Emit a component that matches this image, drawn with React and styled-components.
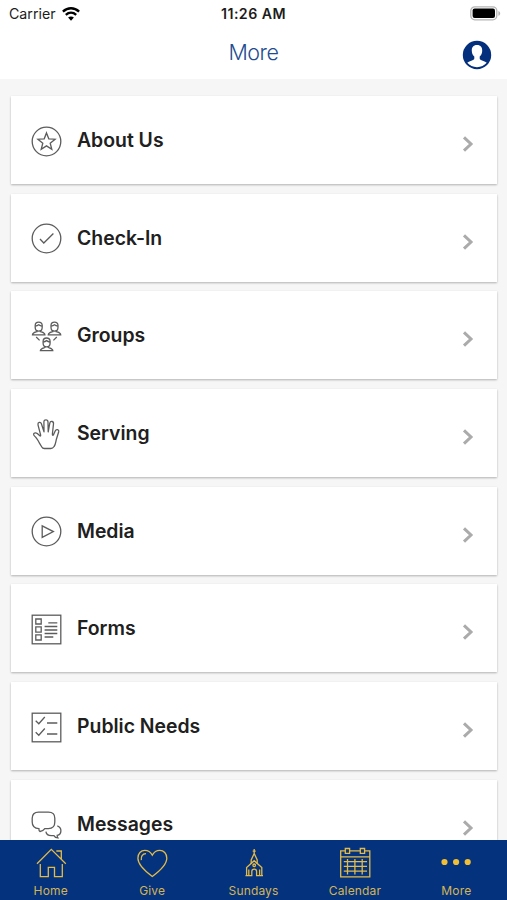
import React from "react";
import styled, { createGlobalStyle } from "styled-components";

const GlobalStyle = createGlobalStyle`
  * {
    box-sizing: border-box;
  }

  body {
    margin: 0;
    background-color: #f6f6f6;
    font-family: Inter, "Liberation Sans", sans-serif;
  }
`;

const Screen = styled.div`
  width: 100%;
  height: 100vh;
  display: flex;
  flex-direction: column;
  overflow: hidden;
`;

const Header = styled.header`
  flex: none;
  height: 79px;
  background-color: #fff;
`;

const StatusBar = styled.div`
  display: grid;
  grid-template-columns: 1fr auto 1fr;
  align-items: center;
  height: 27px;
  padding: 0 6px 0 9px;
  color: #1c1c1c;
`;

const Carrier = styled.div`
  display: flex;
  align-items: center;
  gap: 6px;
  font-size: 14.2px;
`;

const Time = styled.div`
  padding-right: 3px;
  font-size: 14.2px;
  font-weight: 600;
  letter-spacing: 0.45px;
`;

const Battery = styled.svg`
  justify-self: end;
`;

const TitleBar = styled.div`
  display: grid;
  grid-template-columns: 1fr auto 1fr;
  align-items: center;
  height: 52px;
  padding: 0 15px;
`;

const Title = styled.h1`
  grid-column: 2;
  margin: 0;
  padding-bottom: 2px;
  color: #1f4d91;
  font-size: 21.5px;
  font-weight: 300;
  letter-spacing: -0.45px;
`;

const ProfileButton = styled.button`
  justify-self: end;
  display: flex;
  margin-top: 3px;
  padding: 0;
  border: none;
  background: none;
`;

const List = styled.ul`
  flex: 1;
  min-height: 0;
  display: flex;
  flex-direction: column;
  gap: 9.7px;
  margin: 0;
  padding: 17px 10px 0 11px;
  list-style-type: none;
  overflow: hidden;
`;

const Card = styled.li`
  flex: none;
  display: flex;
  align-items: center;
  height: 88px;
  padding: 0 23px 0 20px;
  background-color: #fff;
  box-shadow: 0 1px 2px rgba(0, 0, 0, 0.28);
`;

const CardIcon = styled.svg`
  flex: none;
  width: 31px;
  height: 31px;
  margin-top: 2px;
  fill: none;
  stroke: #5c5c5c;
  stroke-width: 1.3;
`;

const CardLabel = styled.span`
  flex: 1;
  margin-left: 15px;
  color: #202020;
  font-size: 19.4px;
  font-weight: 600;
`;

const Chevron = styled.svg`
  flex: none;
  margin-top: 8px;
  fill: none;
  stroke: #ababab;
  stroke-width: 3;
`;

const TabBar = styled.nav`
  flex: none;
  display: flex;
  height: 60.5px;
  background-color: #05327c;
`;

const Tab = styled.a`
  flex: 1;
  display: flex;
  flex-direction: column;
  align-items: center;
  padding-top: 7.5px;
  color: #d3b556;
  font-size: 12px;
  line-height: 15px;
  letter-spacing: 0.15px;
`;

const TabIcon = styled.svg`
  width: 32px;
  height: 32px;
  margin-bottom: 4px;
  fill: none;
  stroke: #e3bb48;
  stroke-width: 1.3;
`;

const Person = ({ x, y }) => (
  <g transform={`translate(${x} ${y})`}>
    <path d="M3.2 4C3.2 1.700 4.600.6 6.700.6s3.500 1.100 3.500 3.400v1.600c0 2.200-1.500 3.900-3.500 3.900S3.200 7.800 3.200 5.600z" />
    <path d="M3.300 4.600C5 4.300 6 3.700 6.700 3.200c.7.500 1.700 1.100 3.400 1.400" />
    <path d="M5 8.600v1.500c-2.300.7-4.300.9-4.500 3.100h12.400c-.2-2.200-2.200-2.400-4.500-3.100V8.600" />
  </g>
);

const items = [
  {
    label: "About Us",
    icon: (
      <>
        <circle cx="15.500" cy="15.500" r="14.300" />
        <path d="M15.500 6.900l2.300 5.900 6.300.4-4.900 4 1.600 6.200-5.300-3.500-5.300 3.500 1.600-6.200-4.900-4 6.300-.4z" />
      </>
    ),
  },
  {
    label: "Check-In",
    icon: (
      <>
        <circle cx="15.500" cy="15.500" r="14.300" />
        <path d="M9 16l3.800 4L22.400 10.500" />
      </>
    ),
  },
  {
    label: "Groups",
    icon: (
      <>
        <Person x={1} y={0.600} />
        <Person x={16.800} y={0.600} />
        <Person x={8.900} y={16.400} />
        <path d="M5.200 16l3.400 3.400M25.800 16l-3.400 3.400" />
      </>
    ),
  },
  {
    label: "Serving",
    icon: (
      <path
        strokeLinejoin="round"
        d="M8.300 23.800C6.800 21.400 6.200 19.600 4.700 18.200 3.500 17.100 2.200 16.400 2.600 15c.5-1.500 2.500-1.400 3.700-.4l2.500 2.200c.7.500 1-.1.800-.9L7 5.800C6.500 3.200 9.600 2.400 10.400 4.800l2.600 8L12.900 2.900c0-2.800 4-2.800 4.100 0l.2 9.900 1.600-8.700c.5-2.500 4-2 3.700.6L21.400 15c-.1 1.500.5 1.700 1.200.6l1.600-3.600c1-2.300 4-1.500 3.500.7l-2.300 7.500c-.7 2.600-.6 5-2.300 7.300-1 1.500-1.800 2-3.300 2h-6.500c-1.300 0-1.900-.4-2.500-1.500z"
      />
    ),
  },
  {
    label: "Media",
    icon: (
      <>
        <circle cx="15.500" cy="15.500" r="14.300" />
        <path d="M11.200 9.800v11.600l11.200-5.800z" />
      </>
    ),
  },
  {
    label: "Forms",
    icon: (
      <>
        <rect x="1.200" y="1.200" width="28.600" height="28.600" />
        <path d="M4.800 5h5.400v5H4.800zM4.800 12.800h5.400v5.400H4.800zM4.800 20.800h5.400v5.200H4.800z" />
        <path d="M17.300 8.900h9M13.600 12.500h12.700M13.600 16h12.700M13.600 19.500h12.700M13.600 23h8.700" />
      </>
    ),
  },
  {
    label: "Public Needs",
    icon: (
      <>
        <rect x="1.200" y="1.200" width="28.600" height="28.600" />
        <path d="M4.700 8.700l3.100 3L13.800 5M4.700 20.200l3.100 3 6-6.700M16 11h10.300M16 22h10.300" />
      </>
    ),
  },
  {
    label: "Messages",
    icon: (
      <>
        <path d="M9 22.500c-1-.7-1.200-1.500-1.100-2.900C3.500 19.400 1.200 17 1.200 13V9.300c0-4 2.400-6.100 6.400-6.100h9.800c4 0 6.400 2.100 6.400 6.100V13c0 4.200-2.400 6.600-6.400 6.600h-3.600c-1.200 1.700-2.800 2.600-4.800 2.900z" />
        <path d="M26.300 16.900c2.700 1 3.700 2.700 3.600 5-.1 2.600-1.500 4.100-3.700 4.500 0 1 .1 1.600.7 2.400-1.900 0-3.200-.8-4-2.200h-2.600c-3 0-5-1.500-5.400-4" />
      </>
    ),
  },
];

const tabs = [
  {
    label: "Home",
    icon: (
      <>
        <path d="M2 16.800L16.300 2.400l14.500 14.400M21.300 4h5v8.500M5.300 17v12.700h8v-9.300h6.200v9.300h7.800V17" />
      </>
    ),
  },
  {
    label: "Give",
    icon: (
      <>
        <path d="M16.300 29.400C11 25.500 1.900 18.300 1.900 11.200c0-4.700 3-7.900 6.900-7.900 3.600 0 6 2 7.500 4.800 1.500-2.800 3.900-4.800 7.500-4.800 3.900 0 7 3.200 7 7.900 0 7.100-9.200 14.300-14.500 18.200z" />
        <path d="M5.300 13.200C4.800 9.300 6.300 6.900 10 6.700" />
      </>
    ),
  },
  {
    label: "Sundays",
    icon: (
      <>
        <path d="M16.200 2v6M14.700 4.200h3M13.200 17v-4l3-6.500 3 6.500v4" />
        <path d="M8.600 29v-8.500l7.600-6.800 7.600 6.800V29M7.500 28.700h6.300v-4.200c0-3.200 4.800-3.200 4.800 0v4.200H25M10.800 22.500V28M21.600 22.500V28" />
        <circle cx="16.200" cy="18.300" r="1.300" />
      </>
    ),
  },
  {
    label: "Calendar",
    icon: (
      <>
        <path d="M6.100 3.800H1.700v26h29.100v-26h-5M10.700 3.800h10.500M1.700 9.800h29.100" />
        <path d="M6.300 1.500h4.300v4.800H6.300zM21.300 1.500h4.300v4.800h-4.300z" />
        <path d="M8.500 12v15.500M15.900 12v15.500M23.200 12v15.500M4.800 14.700H28M4.800 19.400H28M4.800 24.100H28" />
      </>
    ),
  },
  {
    label: "More",
    icon: (
      <g fill="#f0bf35" stroke="none">
        <circle cx="4.500" cy="15" r="3.100" />
        <circle cx="16.100" cy="15" r="3.100" />
        <circle cx="27.700" cy="15" r="3.100" />
      </g>
    ),
  },
];

const App = () => {
  return (
    <Screen>
      <GlobalStyle />
      <Header>
        <StatusBar>
          <Carrier>
            Carrier
            <svg width="18" height="14" viewBox="0 0 18 14" fill="none" stroke="#000">
              <path d="M.9 4.600c4.800-4.400 11.400-4.400 16.200 0" strokeWidth="2.400" />
              <path d="M3.800 7.800c3.100-2.800 7.300-2.800 10.400 0" strokeWidth="2.300" />
              <path d="M9 13.700l-2.900-3.100c1.700-1.500 4.100-1.500 5.800 0z" fill="#000" stroke="none" />
            </svg>
          </Carrier>
          <Time>11:26 AM</Time>
          <Battery width="31" height="15" viewBox="0 0 31 15">
            <rect x=".8" y=".8" width="26" height="13" rx="4" fill="#fff" stroke="#b5b5b5" strokeWidth="1.300" />
            <rect x="2.600" y="2.600" width="22.400" height="9.400" rx="2" fill="#000" />
            <path d="M28.400 5c2.400.8 2.400 4 0 4.800z" fill="#b5b5b5" />
          </Battery>
        </StatusBar>
        <TitleBar>
          <Title>More</Title>
          <ProfileButton aria-label="Profile">
            <svg width="30" height="30" viewBox="0 0 30 30">
              <circle cx="15" cy="15" r="14.200" fill="#042f7c" />
              <path
                d="M15 5c3.800 0 5.400 2.400 5.200 5.900-.1 2.300-1 4.300-2.500 5.500v2.100c0 1.200 1.300 1.600 3 2.200 1.800.6 3.200 1.100 4 2.100-2.400 2.700-5.700 4.400-9.700 4.400s-7.300-1.700-9.700-4.400c.8-1 2.200-1.500 4-2.100 1.700-.6 3-1 3-2.200v-2.100c-1.500-1.200-2.400-3.200-2.500-5.500C9.600 7.400 11.200 5 15 5z"
                fill="#fff"
              />
            </svg>
          </ProfileButton>
        </TitleBar>
      </Header>
      <List>
        {items.map((item) => (
          <Card key={item.label}>
            <CardIcon viewBox="0 0 31 31">{item.icon}</CardIcon>
            <CardLabel>{item.label}</CardLabel>
            <Chevron width="12" height="16" viewBox="0 0 12 16">
              <path d="M2 1.300L9 8l-7 6.700" />
            </Chevron>
          </Card>
        ))}
      </List>
      <TabBar>
        {tabs.map((tab) => (
          <Tab key={tab.label}>
            <TabIcon viewBox="0 0 32 32">{tab.icon}</TabIcon>
            {tab.label}
          </Tab>
        ))}
      </TabBar>
    </Screen>
  );
};

export default App;
